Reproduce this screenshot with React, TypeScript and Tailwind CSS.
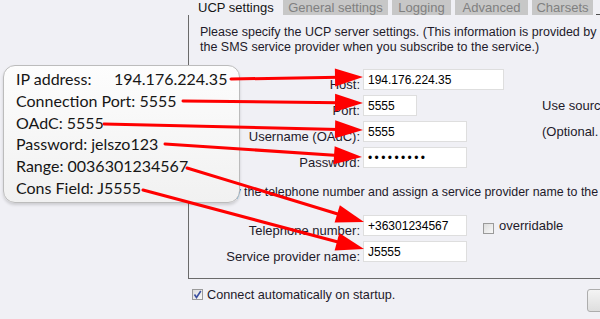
const arrows = [
  [231, 79, 363, 77],
  [183, 101, 363, 103],
  [104, 124, 363, 130],
  [165, 144, 362, 157],
  [187, 168, 364, 222],
  [143, 190, 364, 249],
];

function Arrow({ a }: { a: number[] }) {
  const [x1, y1, x2, y2] = a;
  const dx = x2 - x1;
  const dy = y2 - y1;
  const len = Math.hypot(dx, dy);
  const ux = dx / len;
  const uy = dy / len;
  const bx = x2 - ux * 28;
  const by = y2 - uy * 28;
  const nx = -uy;
  const ny = ux;
  const pts = `${x2},${y2} ${bx + nx * 9},${by + ny * 9} ${bx - nx * 9},${by - ny * 9}`;
  return (
    <g>
      <line x1={x1} y1={y1} x2={bx + ux * 4} y2={by + uy * 4} stroke="#ff0000" strokeWidth={3} strokeLinecap="round" />
      <polygon points={pts} fill="#ff0000" />
    </g>
  );
}

function Field({ value, w, password }: { value: string; w: string; password?: boolean }) {
  return (
    <div
      className={`${w} shrink-0 h-[21px] bg-white border border-[#dedede] flex items-center pl-[4px] text-[12px] text-black whitespace-nowrap ${
        password ? "tracking-[2.4px]" : ""
      }`}
    >
      {value}
    </div>
  );
}

function Row({ label, children, right }: { label: string; children: React.ReactNode; right?: string }) {
  return (
    <div className="flex items-end h-[21px]">
      <div className="w-[160px] shrink-0 text-right text-[13px] leading-[13px] mb-[-1px] text-[#1e1a2a] whitespace-nowrap">
        {label}
      </div>
      <div className="w-[179px] shrink-0 ml-[3px] flex items-center">{children}</div>
      {right && (
        <div className="shrink-0 text-[13px] leading-[13px] mb-[4px] whitespace-nowrap text-[#1e1a2a]">{right}</div>
      )}
    </div>
  );
}

function Box({ checked }: { checked?: boolean }) {
  return (
    <div className="w-[11px] h-[11px] shrink-0 border border-[#9a9a9a] bg-gradient-to-br from-[#dcdcdc] to-[#f8f8f8] flex items-center justify-center">
      {checked && (
        <svg width="9" height="9" viewBox="0 0 9 9">
          <path d="M1.5 4.5 L3.5 7.5 L7.8 1" stroke="#3a4fa0" strokeWidth="1.6" fill="none" />
        </svg>
      )}
    </div>
  );
}

export default function App() {
  const tabs = [
    { t: "General settings", w: "w-[105px]" },
    { t: "Logging", w: "w-[59px]" },
    { t: "Advanced", w: "w-[73px]" },
    { t: "Charsets", w: "w-[61px]" },
  ];
  const notes = [
    ["IP address:", "194.176.224.35"],
    ["Connection Port: 5555"],
    ["OAdC: 5555"],
    ["Password: jelszo123"],
    ["Range: 0036301234567"],
    ["Cons Field: J5555"],
  ];

  return (
    <div className="relative w-[600px] h-[319px] overflow-hidden bg-[#f0f0f5] font-['Liberation_Sans',Arial,sans-serif]">
      <div className="flex flex-col pl-[188px]">
        {/* tab strip */}
        <div className="flex h-[15px] gap-[4px] text-[13px] leading-[15px] whitespace-nowrap">
          <div className="w-[91px] shrink-0 pl-[10px] text-[#151515]">UCP settings</div>
          {tabs.map((tab) => (
            <div key={tab.t} className={`${tab.w} shrink-0 bg-[#c7c7c7] text-[#808080] text-center`}>
              {tab.t}
            </div>
          ))}
          <div className="flex-1 border-b border-[#505050] ml-[-1px]" />
        </div>

        {/* panel */}
        <div className="w-[520px] h-[264px] border-l border-b border-[#6a6a6a] pl-[11px] pt-[10px]">
          <p className="text-[12.5px] leading-[15px] text-[#1e1a2a] whitespace-nowrap">
            Please specify the UCP server settings. (This information is provided by
            <br />
            the SMS service provider when you subscribe to the service.)
          </p>

          <div className="mt-[14px] flex flex-col gap-[5px]">
            <Row label="Host:">
              <Field value="194.176.224.35" w="w-[141px]" />
            </Row>
            <Row label="Port:" right="Use source">
              <Field value="5555" w="w-[54px]" />
            </Row>
            <Row label="Username (OAdC):" right="(Optional.">
              <Field value="5555" w="w-[104px]" />
            </Row>
            <Row label="Password:">
              <Field value="•••••••••" w="w-[104px]" password />
            </Row>
          </div>

          <p className="mt-[17px] text-[12.4px] leading-[15px] text-[#1e1a2a] whitespace-nowrap">
            Specify the telephone number and assign a service provider name to the
          </p>

          <div className="mt-[15px] flex flex-col gap-[5px]">
            <Row label="Telephone number:">
              <Field value="+36301234567" w="w-[104px]" />
              <div className="ml-[16px] mt-[6px]">
                <Box />
              </div>
              <span className="ml-[5px] text-[13px] text-[#1e1a2a] whitespace-nowrap">overridable</span>
            </Row>
            <Row label="Service provider name:">
              <Field value="J5555" w="w-[104px]" />
            </Row>
          </div>
        </div>

        {/* bottom row */}
        <div className="flex items-start w-[474px] mt-[10px]">
          <div className="ml-[4px]">
            <Box checked />
          </div>
          <span className="ml-[4px] text-[12.7px] leading-[12px] text-[#1e1a2a]">Connect automatically on startup.</span>
          <div className="ml-auto w-[75px] h-[23px] rounded-[3px] border border-[#adadad] bg-gradient-to-b from-[#f4f4f4] to-[#dedede]" />
        </div>
      </div>

      {/* callout */}
      <div className="absolute left-[3px] top-[65px] w-[237px] h-[138px] rounded-[12px] border border-[#bcbcbc] bg-gradient-to-b from-[#fdfdfd] to-[#f1f1f1] shadow-[0_2px_3px_rgba(0,0,0,0.15)] pl-[12px] pt-[2px] font-['Lato',sans-serif] text-[16px] leading-[21.8px] text-[#161616]">
        {notes.map((n) => (
          <div key={n[0]} className="whitespace-nowrap">
            {n.length > 1 ? (
              <>
                <span className="inline-block w-[98px]">{n[0]}</span>
                {n[1]}
              </>
            ) : (
              n[0]
            )}
          </div>
        ))}
      </div>

      {/* arrows */}
      <svg className="absolute inset-0" width="600" height="319">
        {arrows.map((a, i) => (
          <Arrow key={i} a={a} />
        ))}
      </svg>
    </div>
  );
}
